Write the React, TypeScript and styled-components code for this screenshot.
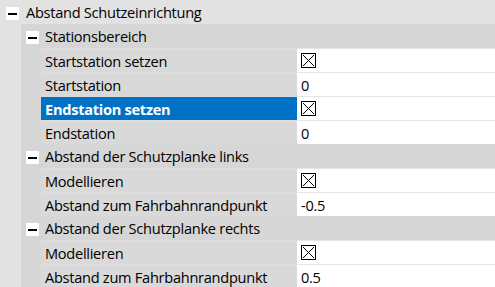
import React from 'react';
import styled, { createGlobalStyle } from 'styled-components';

const Global = createGlobalStyle`
  html, body { margin: 0; padding: 0; background: #e2e2e2; }
  body {
    font-family: "Open Sans", "Noto Sans", sans-serif;
    font-size: 14.6px;
    letter-spacing: -0.28px;
    color: #000;
    overflow: hidden;
  }
`;

const LEVEL_BG = ['#e2e2e2', '#d6d6d6'];

const Frame = styled.div`
  width: 495px;
  height: 287px;
  overflow: hidden;
  background: #e2e2e2;
`;

const GroupHeader = styled.div<{ $level: number }>`
  display: flex;
  align-items: flex-start;
  height: 24px;
  box-sizing: border-box;
  background: ${(p) => LEVEL_BG[p.$level]};
  padding-left: ${(p) => (p.$level === 0 ? 6 : 5)}px;
  padding-top: 7px;
`;

const MinusBox = styled.span`
  display: flex;
  align-items: center;
  justify-content: center;
  width: 13px;
  height: 13px;
  background: #fff;
  flex: none;
  &::before {
    content: '';
    width: 9px;
    height: 2px;
    background: #000;
  }
`;

const HeaderText = styled.span<{ $level: number }>`
  margin-left: ${(p) => (p.$level === 0 ? 7 : 6)}px;
  line-height: 13px;
  margin-top: -1px;
  white-space: nowrap;
`;

const GroupBody = styled.div`
  display: flex;
`;

const Indent = styled.div<{ $level: number }>`
  flex: none;
  width: ${(p) => (p.$level === 0 ? 21 : 20)}px;
  background: ${(p) => LEVEL_BG[p.$level]};
`;

const Children = styled.div`
  flex: 1;
  min-width: 0;
`;

const PropRow = styled.div`
  display: grid;
  grid-template-columns: 256px 1fr;
  height: 24px;
`;

const LabelCell = styled.div<{ $selected?: boolean }>`
  display: flex;
  align-items: center;
  box-sizing: border-box;
  padding-left: 4px;
  border-top: 1px solid ${(p) => (p.$selected ? '#dadada' : '#dedede')};
  background: ${(p) => (p.$selected ? '#0072c6' : '#d9d9d9')};
  color: ${(p) => (p.$selected ? '#fff' : '#000')};
  font-weight: ${(p) => (p.$selected ? 700 : 400)};
  white-space: nowrap;
`;

const ValueCell = styled.div`
  display: flex;
  align-items: center;
  box-sizing: border-box;
  padding-left: 4px;
  border-top: 1px solid #e6e6e6;
  background: #fff;
  white-space: nowrap;
`;

const CheckSvg = styled.svg`
  display: block;
  flex: none;
`;

function CheckBox() {
  return (
    <CheckSvg width="15" height="15" viewBox="0 0 15 15" shapeRendering="crispEdges">
      <rect x="0.5" y="0.5" width="14" height="14" fill="#fff" stroke="#000" />
      <path d="M2 2 L13 13 M13 2 L2 13" stroke="#000" strokeWidth="1" fill="none" />
    </CheckSvg>
  );
}

type Prop = { label: string; value: 'check' | string; selected?: boolean };
type Section = { title: string; props: Prop[] };

const sections: Section[] = [
  {
    title: 'Stationsbereich',
    props: [
      { label: 'Startstation setzen', value: 'check' },
      { label: 'Startstation', value: '0' },
      { label: 'Endstation setzen', value: 'check', selected: true },
      { label: 'Endstation', value: '0' },
    ],
  },
  {
    title: 'Abstand der Schutzplanke links',
    props: [
      { label: 'Modellieren', value: 'check' },
      { label: 'Abstand zum Fahrbahnrandpunkt', value: '-0.5' },
    ],
  },
  {
    title: 'Abstand der Schutzplanke rechts',
    props: [
      { label: 'Modellieren', value: 'check' },
      { label: 'Abstand zum Fahrbahnrandpunkt', value: '0.5' },
    ],
  },
];

export default function App() {
  return (
    <>
      <Global />
      <Frame>
        <GroupHeader $level={0}>
          <MinusBox />
          <HeaderText $level={0}>Abstand Schutzeinrichtung</HeaderText>
        </GroupHeader>
        <GroupBody>
          <Indent $level={0} />
          <Children>
            {sections.map((s) => (
              <div key={s.title}>
                <GroupHeader $level={1}>
                  <MinusBox />
                  <HeaderText $level={1}>{s.title}</HeaderText>
                </GroupHeader>
                <GroupBody>
                  <Indent $level={1} />
                  <Children>
                    {s.props.map((p) => (
                      <PropRow key={p.label}>
                        <LabelCell $selected={p.selected}>{p.label}</LabelCell>
                        <ValueCell>{p.value === 'check' ? <CheckBox /> : p.value}</ValueCell>
                      </PropRow>
                    ))}
                  </Children>
                </GroupBody>
              </div>
            ))}
          </Children>
        </GroupBody>
      </Frame>
    </>
  );
}
